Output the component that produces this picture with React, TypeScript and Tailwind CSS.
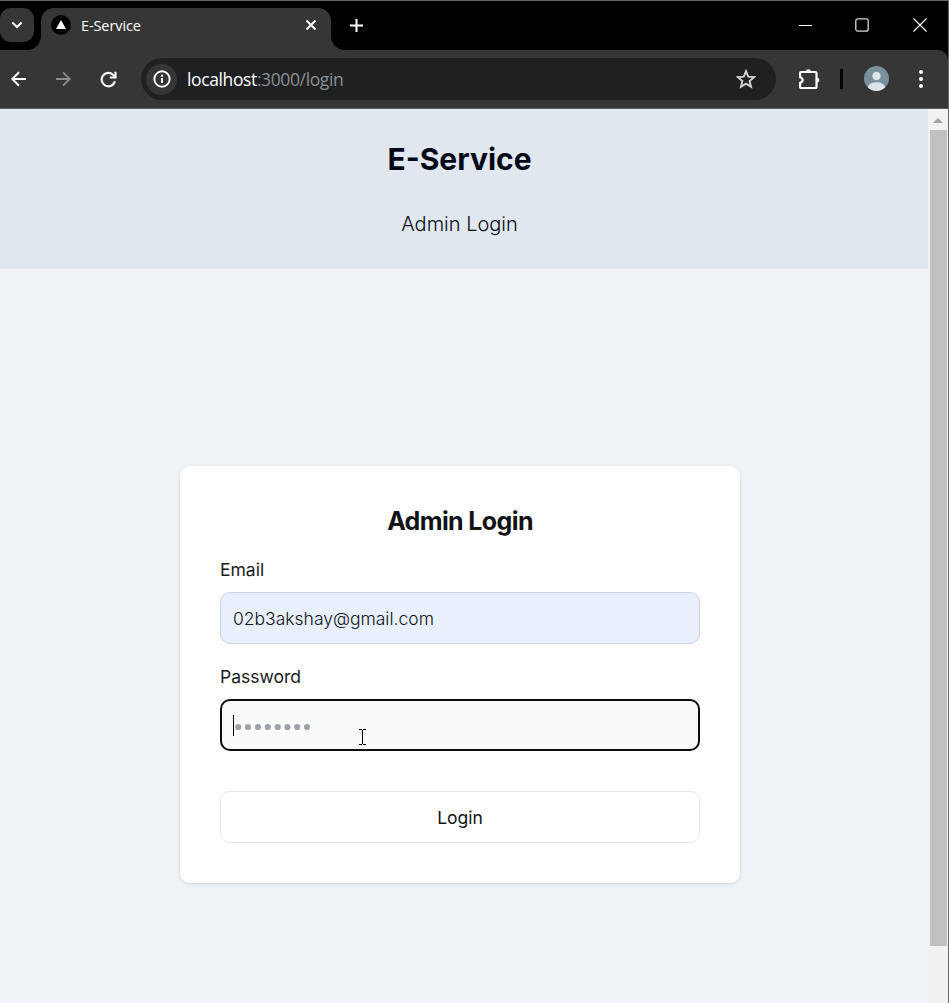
import React from "react";

function TabStrip() {
  return (
    <div className="flex h-[49px] shrink-0 bg-[#363636] text-white">
      <div className="w-[41px] shrink-0 rounded-br-[14px] bg-black">
        <button className="mt-[7px] flex h-[34px] w-[34px] items-center justify-center rounded-[11px] bg-[#363636] pr-[1px]">
          <svg width="12" height="8" viewBox="0 0 12 8" fill="none" stroke="#fff" strokeWidth="2">
            <path d="M1.4 1.5 6 6l4.6-4.5" />
          </svg>
        </button>
      </div>
      <div className="h-[30px] w-[290px] shrink-0 bg-black">
        <div className="mt-[7px] flex h-[42px] items-start rounded-t-[13px] bg-[#363636] pt-[7px] pr-[14px] pl-[10px]">
          <svg width="20" height="20" viewBox="0 0 20 20">
            <circle cx="10" cy="10" r="10" fill="#000" />
            <path d="M10 5l5 9H5z" fill="#fff" />
          </svg>
          <span className="mt-px ml-[10px] font-['Open_Sans','Noto_Sans',sans-serif] text-[14.5px] leading-[20px] tracking-[-0.1px] whitespace-nowrap">
            E-Service
          </span>
          <svg className="mt-[4px] ml-auto" width="12" height="12" viewBox="0 0 12 12" stroke="#fff" strokeWidth="1.8">
            <path d="M1.5 1.5l9 9M10.500 1.500l-9 9" />
          </svg>
        </div>
      </div>
      <div className="flex flex-1 items-center rounded-bl-[14px] bg-black pb-px pl-[19px]">
        <svg width="13" height="13" viewBox="0 0 13 13" stroke="#fff" strokeWidth="2">
          <path d="M6.500 0v13M0 6.500h13" />
        </svg>
        <svg className="ml-auto" width="13" height="13" viewBox="0 0 13 13" stroke="#fff" strokeWidth="1">
          <path d="M0 6.500h13" />
        </svg>
        <svg className="ml-[43px]" width="14" height="14" viewBox="0 0 14 14" fill="none" stroke="#d8d8d8" strokeWidth="1.3">
          <rect x=".8" y=".8" width="12.400" height="12.400" rx="2" />
        </svg>
        <svg className="mr-[21px] ml-[44px]" width="14" height="14" viewBox="0 0 14 14" stroke="#fff" strokeWidth="1.1">
          <path d="M.5.5l13 13M13.500.5l-13 13" />
        </svg>
      </div>
    </div>
  );
}

function Toolbar() {
  return (
    <div className="shrink-0 bg-black">
      <div className="flex h-[59px] items-center rounded-tr-[10px] border-b border-[#5c5c5e] bg-[#363636]">
        <svg className="ml-[11px]" width="16" height="16" viewBox="0 0 16 16" fill="none" stroke="#fff" strokeWidth="2">
          <path d="M15 8H1.500M8 1.300 1.300 8 8 14.700" />
        </svg>
        <svg className="ml-[28px]" width="16" height="16" viewBox="0 0 16 16" fill="none" stroke="#8a8a8a" strokeWidth="1.900">
          <path d="M1 8h13.500M8 1.300 14.700 8 8 14.700" />
        </svg>
        <svg className="ml-[29px]" width="17" height="17" viewBox="0 0 17 17" fill="none" stroke="#fff" strokeWidth="2.100">
          <path d="M14.900 10.200A6.700 6.700 0 1 1 13.600 4.400L15.300 6.300" />
          <path d="M15.500.8v5.700H9.800" />
        </svg>
        <div className="ml-[24px] flex h-[42px] w-[635px] items-center rounded-full bg-[#1f2022] pr-[20px] pl-[6px]">
          <div className="-ml-px flex h-[31px] w-[31px] items-center justify-center rounded-full bg-[#363636]">
            <svg width="18" height="18" viewBox="0 0 18 18" fill="none" stroke="#fff">
              <circle cx="9" cy="9" r="7.700" strokeWidth="1.900" />
              <path d="M9 8v5M9 4.800v1.900" strokeWidth="1.900" />
            </svg>
          </div>
          <span className="ml-[10px] font-['Open_Sans','Noto_Sans',sans-serif] text-[17.5px] leading-[24px] tracking-[-0.38px] whitespace-nowrap text-[#8c8f92]">
            <span className="text-white">localhost</span>:3000/login
          </span>
          <svg className="ml-auto" width="20" height="20" viewBox="0 0 20 20" fill="none" stroke="#d4d4d4" strokeWidth="1.900">
            <path d="M10 2.200l2.200 5.400 5.900.5-4.500 3.900 1.400 5.800-5-3.100-5 3.100 1.400-5.800L1.900 8.100l5.900-.5z" />
          </svg>
        </div>
        <svg className="mb-[1px] ml-[22px]" width="23" height="22" viewBox="0 0 23 22">
          <path
            d="M3.200 4h14.200q1.100 0 1.100 1.100v13.800q0 1.100-1.100 1.100H3.200q-1.100 0-1.100-1.100v-4.100c3.400-1 3.400-4.600 0-5.600V5.100Q2.100 4 3.200 4z"
            fill="none"
            stroke="#fff"
            strokeWidth="2.200"
          />
          <path d="M7.700 4a2.600 2.800 0 0 1 5.200 0zM18.500 9.400a2.800 2.600 0 0 1 0 5.200z" fill="#fff" />
        </svg>
        <div className="ml-[19px] h-[20px] w-[3px] bg-black" />
        <svg className="mb-[1px] ml-[21px]" width="25" height="25" viewBox="0 0 25 25">
          <defs>
            <clipPath id="avatar">
              <circle cx="12.500" cy="12.500" r="12.500" />
            </clipPath>
          </defs>
          <g clipPath="url(#avatar)">
            <path d="M0 0h25v25H0z" fill="#78909c" />
            <circle cx="12.500" cy="10" r="4.200" fill="#dde3ea" />
            <ellipse cx="12.500" cy="21.300" rx="8.500" ry="5" fill="#dde3ea" />
          </g>
        </svg>
        <svg className="ml-[30px]" width="4" height="18" viewBox="0 0 4 18" fill="#fff">
          <circle cx="2" cy="2" r="2" />
          <circle cx="2" cy="9" r="2" />
          <circle cx="2" cy="16" r="2" />
        </svg>
      </div>
    </div>
  );
}

function LoginCard() {
  return (
    <form className="flex w-[560px] flex-col rounded-[10px] bg-white px-[40px] pt-[40px] pb-[40px] shadow-[0_1px_4px_rgba(0,0,0,0.13)]">
      <h2 className="text-center text-[25px] leading-[31px] font-[650] tracking-[-0.62px] text-[#111315]">
        Admin Login
      </h2>
      <label className="mt-[20px] text-[17.5px] leading-[26px] text-[#18191b]">Email</label>
      <div className="mt-[9px] flex h-[52px] items-center rounded-[10px] border border-[#cbd3de] bg-[#e8f0fe] px-[12px] text-[17.5px] leading-[25px] font-[350] text-[#111315]">
        02b3akshay@gmail.com
      </div>
      <label className="mt-[20px] text-[17.5px] leading-[26px] text-[#18191b]">Password</label>
      <div className="relative mt-[9px] flex h-[52px] items-center rounded-[10px] border-2 border-[#0b0c0e] bg-[#f9fbfb] pl-[11px]">
        <span className="h-[21px] w-px bg-black" />
        <svg className="mt-[3px] ml-[1px]" width="78" height="8" viewBox="0 0 78 8" fill="#9ea3aa">
          {[3.2, 13, 23, 32.800, 42.700, 52.400, 62.200, 72].map((cx) => (
            <circle key={cx} cx={cx} cy="4" r="3.100" />
          ))}
        </svg>
        <svg
          className="absolute top-[28px] left-[137px]"
          width="7"
          height="16"
          viewBox="0 0 7 16"
          fill="none"
          stroke="#000"
          shapeRendering="crispEdges"
        >
          <path d="M0 .5h3M4 .5h3M3.500 1v14M0 15.500h3M4 15.500h3" />
        </svg>
      </div>
      <button
        type="button"
        className="mt-[40px] h-[52px] rounded-[10px] border border-[#e5e7e9] bg-white text-[17.5px] leading-[25px] text-[#111315]"
      >
        Login
      </button>
    </form>
  );
}

export default function App() {
  return (
    <div className="flex h-[1003px] w-[949px] flex-col overflow-hidden border-t border-r border-[#666] bg-black font-['Inter',sans-serif]">
      <TabStrip />
      <Toolbar />
      <div className="flex min-h-0 flex-1">
        <main className="flex w-[928px] flex-col items-center bg-[#f0f4f9]">
          <header className="flex h-[160px] w-full shrink-0 flex-col items-center bg-[#e1e7ef] pt-[30px] pr-[9px]">
            <h1 className="text-[30px] leading-[40px] font-bold text-[#020817]">E-Service</h1>
            <p className="mt-[31px] text-[20px] leading-[28px] font-[350] text-[#0b0e14]">Admin Login</p>
          </header>
          <div className="mt-[197px] pr-[8px]">
            <LoginCard />
          </div>
        </main>
        <div className="flex w-[20px] flex-col items-center bg-[#f1f1f1]">
          <svg className="mt-[9px]" width="10" height="5" viewBox="0 0 10 5">
            <path d="M5 0l5 5H0z" fill="#a3a3a3" />
          </svg>
          <div className="mt-[7px] h-[816px] w-[17px] bg-[#c1c1c1]" />
        </div>
      </div>
    </div>
  );
}
